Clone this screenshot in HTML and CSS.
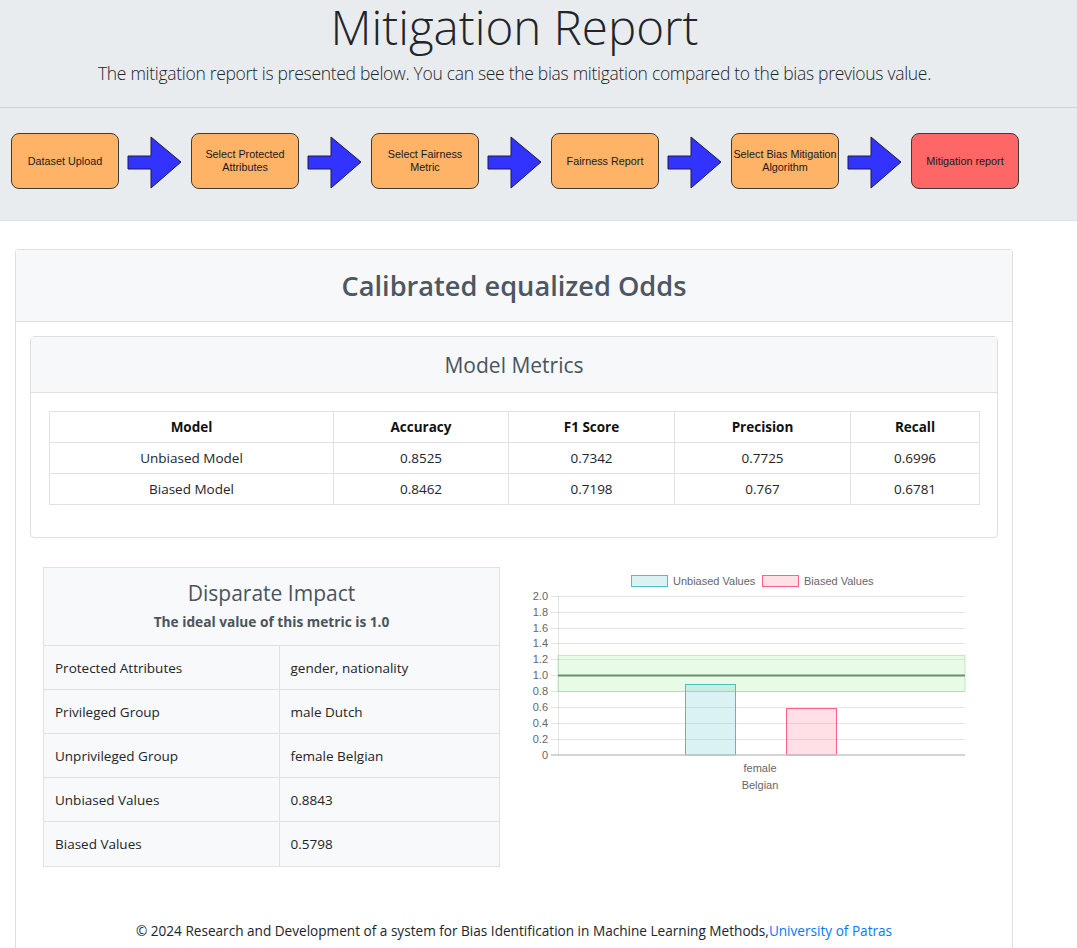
FILE: index.html
```html
<!DOCTYPE html>
<html lang="en">
<head>
<meta charset="utf-8">
<title>Mitigation Report</title>
<link rel="stylesheet" href="styles.css">
</head>
<body>
<header class="hero">
  <div class="hero-top">
    <div class="hero-inner">
      <h1 class="title">Mitigation Report</h1>
      <p class="lead">The mitigation report is presented below. You can see the bias mitigation compared to the bias previous value.</p>
    </div>
  </div>
  <div class="flow">
    <div class="step">Dataset Upload</div>
    <svg class="arrow" viewBox="0 0 56 54" width="56" height="54"><polygon points="1,20 24,20 24,1 54,26 24,52 24,33 1,33" fill="#3333ff" stroke="#1a1a4a" stroke-width="1"/></svg>
    <div class="step">Select Protected<br>Attributes</div>
    <svg class="arrow" viewBox="0 0 56 54" width="56" height="54"><polygon points="1,20 24,20 24,1 54,26 24,52 24,33 1,33" fill="#3333ff" stroke="#1a1a4a" stroke-width="1"/></svg>
    <div class="step">Select Fairness<br>Metric</div>
    <svg class="arrow" viewBox="0 0 56 54" width="56" height="54"><polygon points="1,20 24,20 24,1 54,26 24,52 24,33 1,33" fill="#3333ff" stroke="#1a1a4a" stroke-width="1"/></svg>
    <div class="step">Fairness Report</div>
    <svg class="arrow" viewBox="0 0 56 54" width="56" height="54"><polygon points="1,20 24,20 24,1 54,26 24,52 24,33 1,33" fill="#3333ff" stroke="#1a1a4a" stroke-width="1"/></svg>
    <div class="step">Select Bias Mitigation<br>Algorithm</div>
    <svg class="arrow" viewBox="0 0 56 54" width="56" height="54"><polygon points="1,20 24,20 24,1 54,26 24,52 24,33 1,33" fill="#3333ff" stroke="#1a1a4a" stroke-width="1"/></svg>
    <div class="step step-current">Mitigation report</div>
  </div>
</header>

<main class="page">
  <section class="card">
    <div class="card-head">
      <h2 class="card-title">Calibrated equalized Odds</h2>
    </div>
    <div class="card-body">
      <section class="inner-card">
        <div class="inner-head"><h3 class="inner-title">Model Metrics</h3></div>
        <div class="inner-body">
          <table class="metrics">
            <colgroup>
              <col class="c-model"><col class="c-acc"><col class="c-f1"><col class="c-prec"><col class="c-rec">
            </colgroup>
            <thead>
              <tr><th>Model</th><th>Accuracy</th><th>F1 Score</th><th>Precision</th><th>Recall</th></tr>
            </thead>
            <tbody>
              <tr><td>Unbiased Model</td><td>0.8525</td><td>0.7342</td><td>0.7725</td><td>0.6996</td></tr>
              <tr><td>Biased Model</td><td>0.8462</td><td>0.7198</td><td>0.767</td><td>0.6781</td></tr>
            </tbody>
          </table>
        </div>
      </section>

      <div class="metric-row">
        <section class="di-card">
          <div class="di-head">
            <h3 class="di-title">Disparate Impact</h3>
            <p class="di-sub">The ideal value of this metric is 1.0</p>
          </div>
          <table class="di-table">
            <tr><td>Protected Attributes</td><td>gender, nationality</td></tr>
            <tr><td>Privileged Group</td><td>male Dutch</td></tr>
            <tr><td>Unprivileged Group</td><td>female Belgian</td></tr>
            <tr><td>Unbiased Values</td><td>0.8843</td></tr>
            <tr><td>Biased Values</td><td>0.5798</td></tr>
          </table>
        </section>

        <div class="chart">
          <svg width="470" height="235" viewBox="0 0 470 235" class="chart-svg">
            <!-- legend -->
            <rect x="121.5" y="11.5" width="36" height="11" fill="rgba(75,192,192,0.2)" stroke="rgb(75,192,192)" stroke-width="1"/>
            <text x="163" y="20.5" class="lg">Unbiased Values</text>
            <rect x="252.5" y="11.5" width="36" height="11" fill="rgba(255,99,132,0.2)" stroke="rgb(255,99,132)" stroke-width="1"/>
            <text x="294" y="20.5" class="lg">Biased Values</text>
            <!-- grid -->
            <g stroke="rgba(0,0,0,0.1)" stroke-width="1">
              <line x1="41" x2="455" y1="32.5" y2="32.5"/>
              <line x1="41" x2="455" y1="48.5" y2="48.5"/>
              <line x1="41" x2="455" y1="64.5" y2="64.5"/>
              <line x1="41" x2="455" y1="79.5" y2="79.5"/>
              <line x1="41" x2="455" y1="95.5" y2="95.5"/>
              <line x1="41" x2="455" y1="111.5" y2="111.5"/>
              <line x1="41" x2="455" y1="127.5" y2="127.5"/>
              <line x1="41" x2="455" y1="143.5" y2="143.5"/>
              <line x1="41" x2="455" y1="159.5" y2="159.5"/>
              <line x1="41" x2="455" y1="175.5" y2="175.5"/>
              <line x1="48.5" x2="48.5" y1="32" y2="191"/>
            </g>
            <!-- ticks -->
            <g class="tk" text-anchor="end">
              <text x="38" y="36">2.0</text>
              <text x="38" y="52">1.8</text>
              <text x="38" y="68">1.6</text>
              <text x="38" y="83">1.4</text>
              <text x="38" y="99">1.2</text>
              <text x="38" y="115">1.0</text>
              <text x="38" y="131">0.8</text>
              <text x="38" y="147">0.6</text>
              <text x="38" y="163">0.4</text>
              <text x="38" y="179">0.2</text>
              <text x="38" y="195">0</text>
            </g>
            <!-- band -->
            <rect x="48" y="91.5" width="407" height="36" fill="rgba(144,238,144,0.22)" stroke="rgba(120,220,120,0.45)" stroke-width="1"/>
            <line x1="48" x2="455" y1="111.5" y2="111.5" stroke="#6d8f6d" stroke-width="2"/>
            <!-- bars -->
            <rect x="175.5" y="120.5" width="50" height="70.5" fill="rgba(75,192,192,0.2)" stroke="rgb(75,192,192)" stroke-width="1"/>
            <rect x="276.5" y="144.5" width="50" height="46.5" fill="rgba(255,99,132,0.2)" stroke="rgb(255,99,132)" stroke-width="1"/>
            <line x1="41" x2="455" y1="191" y2="191" stroke="#c4c4c4" stroke-width="1.5"/>
            <text x="250" y="208" class="tk" text-anchor="middle">female</text>
            <text x="250" y="225" class="tk" text-anchor="middle">Belgian</text>
          </svg>
        </div>
      </div>

      <footer class="foot">© 2024 Research and Development of a system for Bias Identification in Machine Learning Methods,<a href="#">University of Patras</a></footer>
    </div>
  </section>
</main>
</body>
</html>
```

FILE: styles.css
```css
* { box-sizing: border-box; }

body {
  margin: 0;
  font-family: "Open Sans", "Noto Sans", sans-serif;
  color: #212529;
  background: #fff;
  font-size: 14px;
}

.hero {
  background: #e9ecef;
  border-bottom: 1px solid #dfe2e5;
}

.hero-top {
  height: 108px;
  border-bottom: 1px solid #d2d5d8;
}

.hero-inner {
  width: 1029px;
  text-align: center;
  padding-top: 2px;
}

.title {
  margin: 0;
  font-size: 47.5px;
  font-weight: 300;
  line-height: 50px;
  color: #212529;
}

.lead {
  margin: 9px 0 0;
  font-size: 17.5px;
  font-weight: 300;
  letter-spacing: -0.3px;
  line-height: 24px;
}

.flow {
  height: 112px;
  display: flex;
  align-items: center;
  padding: 0 0 6px 11px;
  gap: 8px;
}

.step {
  width: 108px;
  height: 56px;
  flex: none;
  background: #ffb366;
  border: 1.5px solid #3b3b3b;
  border-radius: 8px;
  display: flex;
  align-items: center;
  justify-content: center;
  text-align: center;
  font-family: "Liberation Sans", Arial, sans-serif;
  font-size: 10.8px;
  line-height: 13px;
  color: #1a1a1a;
  white-space: nowrap;
}

.step-current { background: #ff6666; }

.arrow { flex: none; display: block; margin-top: 4px; }

.page {
  width: 1029px;
  padding: 28px 0 0 15px;
}

.card {
  width: 998px;
  border: 1px solid #dfdfdf;
  border-radius: 4px 4px 0 0;
  border-bottom: none;
  background: #fff;
}

.card-head {
  height: 72px;
  background: #f7f8f9;
  border-bottom: 1px solid #dfdfdf;
  display: flex;
  align-items: center;
  justify-content: center;
}

.card-title {
  margin: 0;
  font-size: 27.2px;
  font-weight: 600;
  color: #4d5761;
}

.card-body {
  padding: 14px 14px 0 14px;
}

.inner-card {
  border: 1px solid #dfdfdf;
  border-radius: 4px;
}

.inner-head {
  height: 56px;
  background: #f7f8f9;
  border-bottom: 1px solid #dfdfdf;
  display: flex;
  align-items: center;
  justify-content: center;
}

.inner-title {
  margin: 0;
  font-size: 21px;
  font-weight: 500;
  color: #4a545e;
}

.inner-body {
  padding: 18px 18px 32px 18px;
}

.metrics {
  width: 930px;
  border-collapse: collapse;
  table-layout: fixed;
  font-size: 13.5px;
}

.c-model { width: 284px; }
.c-acc { width: 175px; }
.c-f1 { width: 166px; }
.c-prec { width: 176px; }
.c-rec { width: 129px; }

.metrics th, .metrics td {
  border: 1px solid #dee2e6;
  height: 31px;
  padding: 0 4px;
  text-align: center;
  color: #212529;
}

.metrics th { font-weight: 700; color: #111; }

.metric-row {
  display: flex;
  align-items: flex-start;
  padding: 26px 0 0 13px;
}

.di-card {
  width: 457px;
  margin-top: 3px;
  background: #f8f9fa;
  border: 1px solid #dee2e6;
}

.di-head {
  height: 77px;
  text-align: center;
  padding-top: 12px;
}

.di-title {
  margin: 0;
  font-size: 21px;
  font-weight: 500;
  line-height: 26px;
  color: #4a545e;
}

.di-sub {
  margin: 6px 0 0;
  font-size: 13.7px;
  font-weight: 700;
  line-height: 20px;
  color: #4a545e;
}

.di-table {
  width: 100%;
  border-collapse: collapse;
  font-size: 13.5px;
}

.di-table td {
  border-top: 1px solid #dee2e6;
  height: 44px;
  padding: 0 11px;
  color: #212529;
}

.di-table td:first-child {
  width: 235px;
  border-right: 1px solid #dee2e6;
}

.chart {
  margin-left: 10px;
}

.chart-svg { display: block; }

.chart-svg text {
  font-family: "Liberation Sans", Arial, sans-serif;
  font-size: 11px;
  fill: #666;
}

.foot {
  text-align: center;
  padding: 54px 0 8px;
  font-size: 13.6px;
  color: #212529;
}

.foot a { color: #007bff; text-decoration: none; }
```
